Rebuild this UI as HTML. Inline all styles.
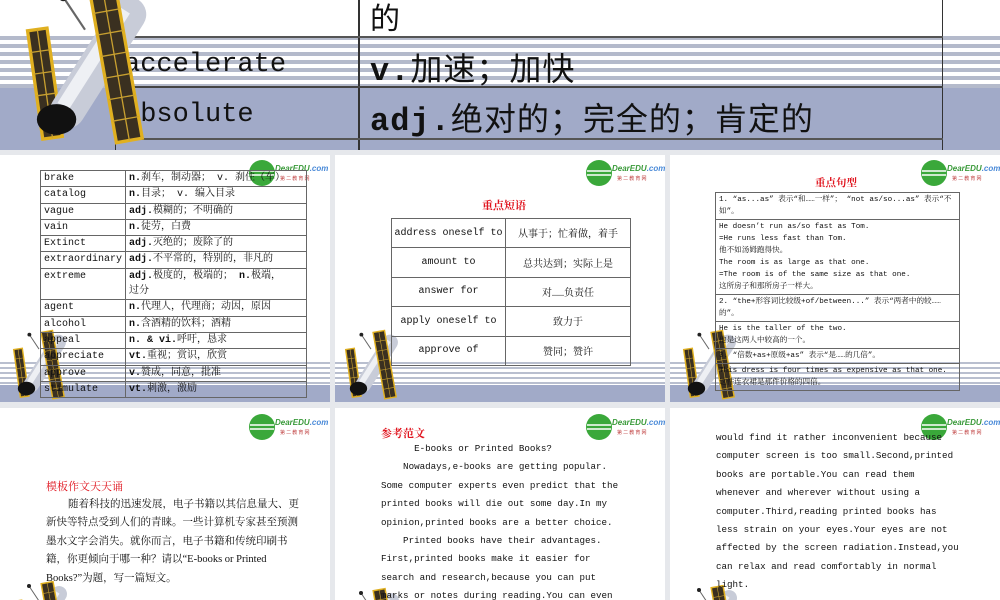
<!DOCTYPE html>
<html><head><meta charset="utf-8"><style>
*{margin:0;padding:0;box-sizing:border-box}
html,body{width:1000px;height:600px;overflow:hidden}
body{background:#e6e8ec;position:relative;font-family:"Liberation Sans","Noto Sans CJK SC",sans-serif}
.p{position:absolute;background:#fff;overflow:hidden}
.stripes{position:absolute;left:0;right:0;background:repeating-linear-gradient(to bottom,#b9bfcf 0,#b9bfcf 2px,#fff 2px,#fff 5px)}
.bstripes{position:absolute;left:0;right:0;background:repeating-linear-gradient(to bottom,#fff 0,#fff 4px,#b4bacb 4px,#b4bacb 8px)}
.solid{position:absolute;left:0;right:0;background:#a1aac8}
.mono{font-family:"Liberation Mono","Noto Serif CJK SC",monospace}
table{border-collapse:collapse;position:absolute}
td{border:1px solid #666;color:#111;vertical-align:top}
.logo{position:absolute;width:80px;height:28px}
.red{color:#e0141e}
.txt{position:absolute;font-family:"Liberation Mono","Noto Serif CJK SC",monospace;font-size:9.2px;line-height:18.4px;color:#111;white-space:pre}
.sat{position:absolute}
.t2 td{vertical-align:middle!important;height:29.4px;padding:0}
</style></head><body>
<svg width="0" height="0" style="position:absolute;left:0;top:0"><defs>
<symbol id="sat" viewBox="0 0 60 80">
<g transform="rotate(-8 30 40)">
<rect x="6" y="22" width="9" height="50" fill="#3a3020" stroke="#e0b020" stroke-width="1.5"/>
<path d="M6 32h9M6 42h9M6 52h9M6 62h9M10.5 22v50" stroke="#c8a030" stroke-width=".6"/>
</g>
<path d="M50 18 L22 62" stroke="#c8ccd8" stroke-width="16" stroke-linecap="round"/>
<path d="M48 16 L20 60" stroke="#eef0f4" stroke-width="6"/>
<ellipse cx="17" cy="66" rx="9" ry="7" fill="#111"/>
<line x1="30" y1="25" x2="20" y2="10" stroke="#666" stroke-width="1"/><circle cx="20" cy="10" r="2" fill="#222"/>
<g transform="rotate(-10 45 40)">
<rect x="38" y="6" width="12" height="70" fill="#3a3020" stroke="#e0b020" stroke-width="1.5"/>
<path d="M38 16h12M38 26h12M38 36h12M38 46h12M38 56h12M38 66h12M44 6v70" stroke="#c8a030" stroke-width=".6"/>
</g>
</symbol>
<symbol id="logo" viewBox="0 0 80 28">
<circle cx="14" cy="14" r="13" fill="#3aa83a"/>
<path d="M2 12h24M2 16h24" stroke="#fff" stroke-width="1.5"/>
<text x="27" y="12" font-family="Liberation Sans" font-size="8" font-weight="bold" font-style="italic" fill="#3a9a3a">DearEDU<tspan fill="#4a8ad8">.com</tspan></text>
<text x="32" y="21" font-size="5" fill="#c04040" font-family="Noto Sans CJK SC">第 二 教 育 网</text>
</symbol>
</defs></svg>

<!-- banner -->
<div class="p" style="left:0;top:0;width:1000px;height:150px;background:#fff">
<div class="bstripes" style="top:32px;height:56px"></div>
<div class="solid" style="top:88px;height:62px"></div>
<div style="position:absolute;left:115px;top:0;width:828px;height:150px;border-left:1.5px solid #333;border-right:1.5px solid #333"></div>
<div style="position:absolute;left:358px;top:0;width:1.5px;height:150px;background:#333"></div>
<div style="position:absolute;left:115px;top:36px;width:828px;height:2px;background:#555"></div>
<div style="position:absolute;left:115px;top:86px;width:828px;height:2px;background:#444"></div>
<div style="position:absolute;left:115px;top:138px;width:828px;height:1.5px;background:#555"></div>
<div style="position:absolute;left:370px;top:-6px;font-size:30px;font-family:'Noto Sans CJK SC',sans-serif;color:#111">的</div>
<div class="mono" style="position:absolute;left:124px;top:50px;font-size:27px;color:#111">accelerate</div>
<div style="position:absolute;left:370px;top:44px;font-size:32px;color:#111;font-family:'Liberation Mono','Noto Sans CJK SC',monospace;letter-spacing:1px"><b>v.</b>加速；加快</div>
<div class="mono" style="position:absolute;left:124px;top:100px;font-size:27px;color:#111">absolute</div>
<div style="position:absolute;left:370px;top:94px;font-size:32px;color:#111;font-family:'Liberation Mono','Noto Sans CJK SC',monospace;letter-spacing:1px"><b>adj.</b>绝对的；完全的；肯定的</div>
<svg class="sat" style="left:-10px;top:-25px" width="190" height="175"><use href="#sat"/></svg>
</div>

<!-- row1 panel1 -->
<div class="p" style="left:0;top:155px;width:330px;height:247px">
<div class="stripes" style="top:207px;height:23px"></div>
<div class="solid" style="top:230px;height:17px"></div>
<svg class="sat" style="left:8px;top:170px" width="62" height="77"><use href="#sat"/></svg>
<svg class="logo" style="left:248px;top:4px"><use href="#logo"/></svg>
<table class="mono" style="left:40px;top:15px;width:267px;font-size:10px;line-height:15.3px">
<tr><td style="width:85px;padding-left:3px">brake</td><td style="padding-left:3px"><b>n.</b>刹车，制动器； v. 刹住（车）</td></tr>
<tr><td style="padding-left:3px">catalog</td><td style="padding-left:3px"><b>n.</b>目录； v. 编入目录</td></tr>
<tr><td style="padding-left:3px">vague</td><td style="padding-left:3px"><b>adj.</b>模糊的；不明确的</td></tr>
<tr><td style="padding-left:3px">vain</td><td style="padding-left:3px"><b>n.</b>徒劳，白费</td></tr>
<tr><td style="padding-left:3px">Extinct</td><td style="padding-left:3px"><b>adj.</b>灭绝的；废除了的</td></tr>
<tr><td style="padding-left:3px">extraordinary</td><td style="padding-left:3px"><b>adj.</b>不平常的，特别的，非凡的</td></tr>
<tr><td style="padding-left:3px">extreme</td><td style="padding-left:3px"><b>adj.</b>极度的，极端的； <b>n.</b>极端，<br>过分</td></tr>
<tr><td style="padding-left:3px">agent</td><td style="padding-left:3px"><b>n.</b>代理人，代理商；动因，原因</td></tr>
<tr><td style="padding-left:3px">alcohol</td><td style="padding-left:3px"><b>n.</b>含酒精的饮料；酒精</td></tr>
<tr><td style="padding-left:3px">appeal</td><td style="padding-left:3px"><b>n. &amp; vi.</b>呼吁，恳求</td></tr>
<tr><td style="padding-left:3px">appreciate</td><td style="padding-left:3px"><b>vt.</b>重视；赏识，欣赏</td></tr>
<tr><td style="padding-left:3px">approve</td><td style="padding-left:3px"><b>v.</b>赞成，同意，批准</td></tr>
<tr><td style="padding-left:3px">stimulate</td><td style="padding-left:3px"><b>vt.</b>刺激，激励</td></tr>
</table>
</div>

<!-- row1 panel2 -->
<div class="p" style="left:335px;top:155px;width:330px;height:247px">
<div class="stripes" style="top:207px;height:23px"></div>
<div class="solid" style="top:230px;height:17px"></div>
<svg class="sat" style="left:5px;top:170px" width="62" height="77"><use href="#sat"/></svg>
<svg class="logo" style="left:250px;top:4px"><use href="#logo"/></svg>
<div class="red" style="position:absolute;left:147px;top:42px;font-size:11px;font-weight:bold;font-family:'Noto Serif CJK SC',serif">重点短语</div>
<table class="mono t2" style="left:56px;top:63px;width:240px;font-size:10px;text-align:center">
<tr><td style="width:114px">address oneself to</td><td>从事于；忙着做，着手</td></tr>
<tr><td>amount to</td><td>总共达到；实际上是</td></tr>
<tr><td>answer for</td><td>对……负责任</td></tr>
<tr><td>apply oneself to</td><td>致力于</td></tr>
<tr><td>approve of</td><td>赞同；赞许</td></tr>
</table>
</div>

<!-- row1 panel3 -->
<div class="p" style="left:670px;top:155px;width:330px;height:247px">
<div class="stripes" style="top:207px;height:23px"></div>
<div class="solid" style="top:230px;height:17px"></div>
<svg class="sat" style="left:8px;top:170px" width="62" height="77"><use href="#sat"/></svg>
<svg class="logo" style="left:250px;top:4px"><use href="#logo"/></svg>
<div class="red" style="position:absolute;left:145px;top:20px;font-size:10.5px;font-weight:bold;font-family:'Noto Serif CJK SC',serif">重点句型</div>
<table class="mono" style="left:45px;top:37px;width:245px;font-size:7.6px;line-height:12px">
<tr><td style="padding:1px 3px">1. “as...as” 表示“和……一样”； “not as/so...as” 表示“不如”。</td></tr>
<tr><td style="padding:1px 3px">He doesn’t run as/so fast as Tom.<br>=He runs less fast than Tom.<br>他不如汤姆跑得快。<br>The room is as large as that one.<br>=The room is of the same size as that one.<br>这所房子和那所房子一样大。</td></tr>
<tr><td style="padding:1px 3px">2. “the+形容词比较级+of/between...” 表示“两者中的较……的”。</td></tr>
<tr><td style="padding:1px 3px">He is the taller of the two.<br>他是这两人中较高的一个。</td></tr>
<tr><td style="padding:1px 3px">3. “倍数+as+原级+as” 表示“是……的几倍”。</td></tr>
<tr><td style="padding:1px 3px">This dress is four times as expensive as that one.<br>这件连衣裙是那件价格的四倍。</td></tr>
</table>
</div>

<!-- row2 panel1 -->
<div class="p" style="left:0;top:408px;width:330px;height:192px">
<svg class="logo" style="left:248px;top:5px"><use href="#logo"/></svg>
<svg class="sat" style="left:8px;top:168px" width="62" height="24" viewBox="0 0 62 24" preserveAspectRatio="xMinYMin slice"><use href="#sat" width="62" height="80"/></svg>
<div class="red" style="position:absolute;left:46px;top:70px;font-size:11px;font-family:'Noto Serif CJK SC',serif">模板作文天天诵</div>
<div style="position:absolute;left:46px;top:88px;width:258px;font-size:10.5px;line-height:18.4px;color:#111;font-family:'Liberation Serif','Noto Serif CJK SC',serif">
<div style="text-indent:22px">随着科技的迅速发展，电子书籍以其信息量大、更新快等特点受到人们的青睐。一些计算机专家甚至预测墨水文字会消失。就你而言，电子书籍和传统印刷书籍，你更倾向于哪一种？请以“E-books or Printed Books?”为题，写一篇短文。</div></div>
</div>

<!-- row2 panel2 -->
<div class="p" style="left:335px;top:408px;width:330px;height:192px">
<svg class="logo" style="left:250px;top:5px"><use href="#logo"/></svg>
<svg class="sat" style="left:5px;top:175px" width="62" height="17" viewBox="0 0 62 17" preserveAspectRatio="xMinYMin slice"><use href="#sat" width="62" height="80"/></svg>
<div class="red" style="position:absolute;left:46px;top:17px;font-size:11px;font-weight:bold;font-family:'Noto Serif CJK SC',serif">参考范文</div>
<div class="txt" style="left:46px;top:32px">      E-books or Printed Books?
    Nowadays,e-books are getting popular.
Some computer experts even predict that the
printed books will die out some day.In my
opinion,printed books are a better choice.
    Printed books have their advantages.
First,printed books make it easier for
search and research,because you can put
marks or notes during reading.You can even</div>
</div>

<!-- row2 panel3 -->
<div class="p" style="left:670px;top:408px;width:330px;height:192px">
<svg class="logo" style="left:250px;top:5px"><use href="#logo"/></svg>
<svg class="sat" style="left:8px;top:172px" width="62" height="20" viewBox="0 0 62 20" preserveAspectRatio="xMinYMin slice"><use href="#sat" width="62" height="80"/></svg>
<div class="txt" style="left:46px;top:21px">would find it rather inconvenient because
computer screen is too small.Second,printed
books are portable.You can read them
whenever and wherever without using a
computer.Third,reading printed books has
less strain on your eyes.Your eyes are not
affected by the screen radiation.Instead,you
can relax and read comfortably in normal
light.</div>
</div>
</body></html>
